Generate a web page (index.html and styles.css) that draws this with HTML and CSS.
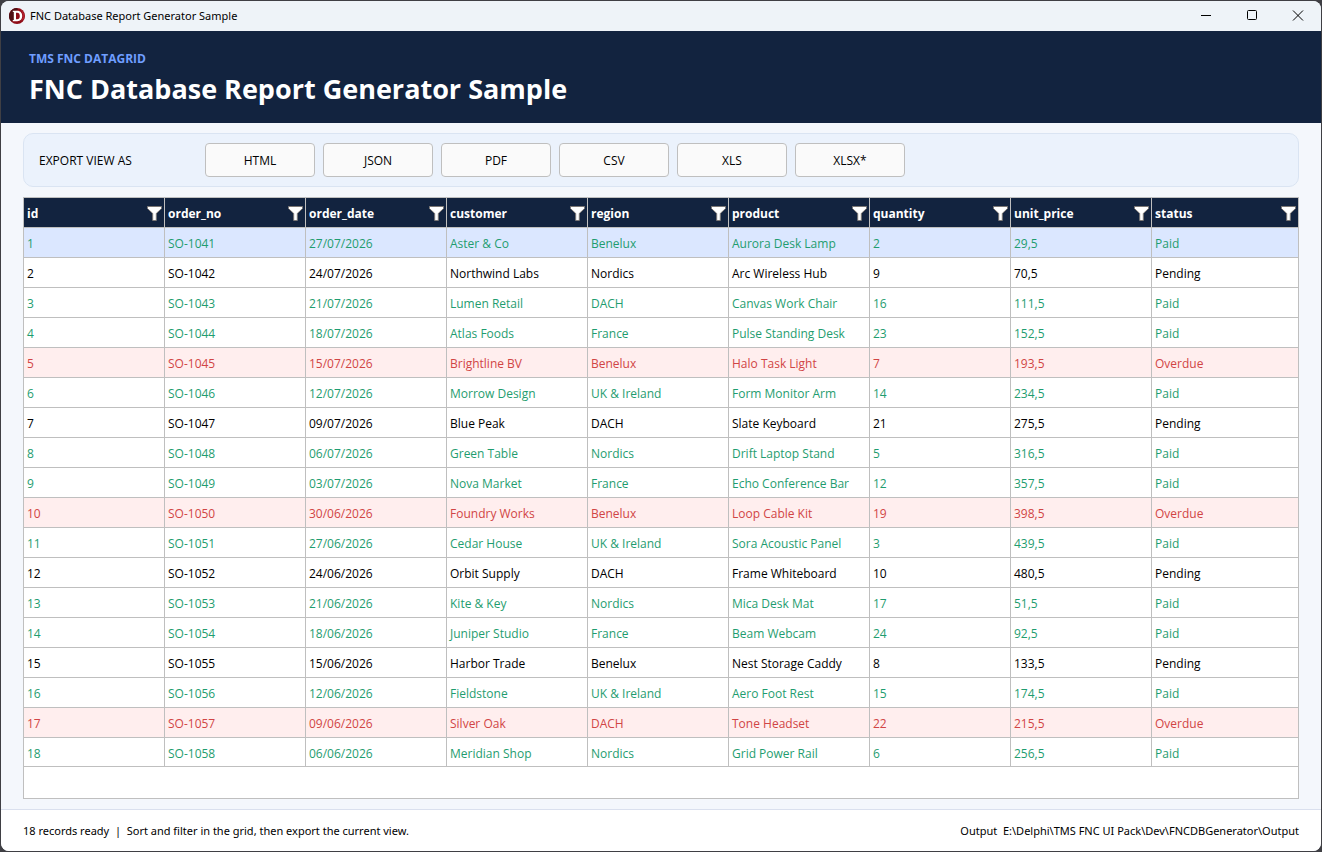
FILE: index.html
```html
<!DOCTYPE html>
<html lang="en">
<head>
<meta charset="utf-8">
<title>FNC Database Report Generator Sample</title>
<link rel="stylesheet" href="styles.css">
</head>
<body>
<svg class="defs" aria-hidden="true">
  <symbol id="funnel" viewBox="0 0 16 16">
    <path d="M1.5 .5H15.5V2.6L10.3 7.4V14.5H6.7V7.4L1.5 2.6Z" fill="#fff" stroke="#7b7775" stroke-width="1"/>
  </symbol>
</svg>
<div class="window">
  <div class="titlebar">
    <svg class="app-icon" viewBox="0 0 16 16" aria-hidden="true">
      <circle cx="8" cy="8" r="8" fill="#8f0d18"/>
      <path d="M8 0A8 8 0 0 0 2 13.3L5 12V3L9 2Z" fill="#4f1015"/>
      <path d="M11 1L13 4L14 9L12 13L15 11A8 8 0 0 0 11 1Z" fill="#b3202c"/>
      <path fill-rule="evenodd" d="M3.8 2.8H8.2C11.4 2.8 13.2 4.9 13.2 8S11.4 13.2 8.2 13.2H3.8V12H4.8V4H3.8ZM7 4.7V11.3H8.1C9.9 11.3 10.8 10.1 10.8 8S9.9 4.7 8.1 4.7Z" fill="#fff"/>
    </svg>
    <span class="titlebar-text">FNC Database Report Generator Sample</span>
    <div class="caption-buttons">
      <button type="button" class="caption-button" aria-label="Minimize"><svg viewBox="0 0 12 12" aria-hidden="true"><path d="M1 5.5H11"/></svg></button>
      <button type="button" class="caption-button" aria-label="Maximize"><svg viewBox="0 0 12 12" aria-hidden="true"><rect x="1.5" y=".5" width="9" height="9" rx="1"/></svg></button>
      <button type="button" class="caption-button" aria-label="Close"><svg viewBox="0 0 12 12" aria-hidden="true"><path d="M1 .5L11 10.5M11 .5L1 10.5"/></svg></button>
    </div>
  </div>
  <header class="banner">
    <p class="eyebrow">TMS FNC DATAGRID</p>
    <h1 class="heading">FNC Database Report Generator Sample</h1>
  </header>
  <main class="content">
    <section class="export-panel" aria-labelledby="export-label">
      <span class="export-label" id="export-label">EXPORT VIEW AS</span>
      <div class="export-buttons">
        <button type="button" class="export-button">HTML</button>
        <button type="button" class="export-button">JSON</button>
        <button type="button" class="export-button">PDF</button>
        <button type="button" class="export-button">CSV</button>
        <button type="button" class="export-button">XLS</button>
        <button type="button" class="export-button">XLSX*</button>
      </div>
    </section>
    <div class="grid">
      <table class="grid-table">
        <colgroup><col class="col" span="8"><col></colgroup>
        <thead>
          <tr>
            <th><div class="head-cell">id<button type="button" class="filter" aria-label="Filter id"><svg><use href="#funnel"/></svg></button></div></th>
            <th><div class="head-cell">order_no<button type="button" class="filter" aria-label="Filter order_no"><svg><use href="#funnel"/></svg></button></div></th>
            <th><div class="head-cell">order_date<button type="button" class="filter" aria-label="Filter order_date"><svg><use href="#funnel"/></svg></button></div></th>
            <th><div class="head-cell">customer<button type="button" class="filter" aria-label="Filter customer"><svg><use href="#funnel"/></svg></button></div></th>
            <th><div class="head-cell">region<button type="button" class="filter" aria-label="Filter region"><svg><use href="#funnel"/></svg></button></div></th>
            <th><div class="head-cell">product<button type="button" class="filter" aria-label="Filter product"><svg><use href="#funnel"/></svg></button></div></th>
            <th><div class="head-cell">quantity<button type="button" class="filter" aria-label="Filter quantity"><svg><use href="#funnel"/></svg></button></div></th>
            <th><div class="head-cell">unit_price<button type="button" class="filter" aria-label="Filter unit_price"><svg><use href="#funnel"/></svg></button></div></th>
            <th><div class="head-cell">status<button type="button" class="filter" aria-label="Filter status"><svg><use href="#funnel"/></svg></button></div></th>
          </tr>
        </thead>
        <tbody>
          <tr class="paid selected"><td>1</td><td>SO-1041</td><td>27/07/2026</td><td>Aster &amp; Co</td><td>Benelux</td><td>Aurora Desk Lamp</td><td>2</td><td>29,5</td><td>Paid</td></tr>
          <tr><td>2</td><td>SO-1042</td><td>24/07/2026</td><td>Northwind Labs</td><td>Nordics</td><td>Arc Wireless Hub</td><td>9</td><td>70,5</td><td>Pending</td></tr>
          <tr class="paid"><td>3</td><td>SO-1043</td><td>21/07/2026</td><td>Lumen Retail</td><td>DACH</td><td>Canvas Work Chair</td><td>16</td><td>111,5</td><td>Paid</td></tr>
          <tr class="paid"><td>4</td><td>SO-1044</td><td>18/07/2026</td><td>Atlas Foods</td><td>France</td><td>Pulse Standing Desk</td><td>23</td><td>152,5</td><td>Paid</td></tr>
          <tr class="overdue"><td>5</td><td>SO-1045</td><td>15/07/2026</td><td>Brightline BV</td><td>Benelux</td><td>Halo Task Light</td><td>7</td><td>193,5</td><td>Overdue</td></tr>
          <tr class="paid"><td>6</td><td>SO-1046</td><td>12/07/2026</td><td>Morrow Design</td><td>UK &amp; Ireland</td><td>Form Monitor Arm</td><td>14</td><td>234,5</td><td>Paid</td></tr>
          <tr><td>7</td><td>SO-1047</td><td>09/07/2026</td><td>Blue Peak</td><td>DACH</td><td>Slate Keyboard</td><td>21</td><td>275,5</td><td>Pending</td></tr>
          <tr class="paid"><td>8</td><td>SO-1048</td><td>06/07/2026</td><td>Green Table</td><td>Nordics</td><td>Drift Laptop Stand</td><td>5</td><td>316,5</td><td>Paid</td></tr>
          <tr class="paid"><td>9</td><td>SO-1049</td><td>03/07/2026</td><td>Nova Market</td><td>France</td><td>Echo Conference Bar</td><td>12</td><td>357,5</td><td>Paid</td></tr>
          <tr class="overdue"><td>10</td><td>SO-1050</td><td>30/06/2026</td><td>Foundry Works</td><td>Benelux</td><td>Loop Cable Kit</td><td>19</td><td>398,5</td><td>Overdue</td></tr>
          <tr class="paid"><td>11</td><td>SO-1051</td><td>27/06/2026</td><td>Cedar House</td><td>UK &amp; Ireland</td><td>Sora Acoustic Panel</td><td>3</td><td>439,5</td><td>Paid</td></tr>
          <tr><td>12</td><td>SO-1052</td><td>24/06/2026</td><td>Orbit Supply</td><td>DACH</td><td>Frame Whiteboard</td><td>10</td><td>480,5</td><td>Pending</td></tr>
          <tr class="paid"><td>13</td><td>SO-1053</td><td>21/06/2026</td><td>Kite &amp; Key</td><td>Nordics</td><td>Mica Desk Mat</td><td>17</td><td>51,5</td><td>Paid</td></tr>
          <tr class="paid"><td>14</td><td>SO-1054</td><td>18/06/2026</td><td>Juniper Studio</td><td>France</td><td>Beam Webcam</td><td>24</td><td>92,5</td><td>Paid</td></tr>
          <tr><td>15</td><td>SO-1055</td><td>15/06/2026</td><td>Harbor Trade</td><td>Benelux</td><td>Nest Storage Caddy</td><td>8</td><td>133,5</td><td>Pending</td></tr>
          <tr class="paid"><td>16</td><td>SO-1056</td><td>12/06/2026</td><td>Fieldstone</td><td>UK &amp; Ireland</td><td>Aero Foot Rest</td><td>15</td><td>174,5</td><td>Paid</td></tr>
          <tr class="overdue"><td>17</td><td>SO-1057</td><td>09/06/2026</td><td>Silver Oak</td><td>DACH</td><td>Tone Headset</td><td>22</td><td>215,5</td><td>Overdue</td></tr>
          <tr class="paid"><td>18</td><td>SO-1058</td><td>06/06/2026</td><td>Meridian Shop</td><td>Nordics</td><td>Grid Power Rail</td><td>6</td><td>256,5</td><td>Paid</td></tr>
        </tbody>
      </table>
    </div>
  </main>
  <footer class="statusbar">
    <span class="status-text">18 records ready &nbsp;|&nbsp; Sort and filter in the grid, then export the current view.</span>
    <span class="status-text">Output &nbsp;E:\Delphi\TMS FNC UI Pack\Dev\FNCDBGenerator\Output</span>
  </footer>
</div>
</body>
</html>
```

FILE: styles.css
```css
* {
  box-sizing: border-box;
}

body {
  margin: 0;
  padding: 1px;
  min-height: 100vh;
  display: flex;
  background: #3f3f44;
  color: #000;
  font-family: "Open Sans", "Noto Sans", sans-serif;
  font-size: 12px;
  line-height: 16px;
}

button {
  margin: 0;
  padding: 0;
  border: 0;
  background: none;
  color: inherit;
  font: inherit;
}

.defs {
  position: absolute;
  width: 0;
  height: 0;
}

.window {
  flex: 1;
  min-width: 0;
  display: flex;
  flex-direction: column;
  overflow: hidden;
  border-radius: 8px;
  background: #f4f7fc;
}

.titlebar {
  display: flex;
  align-items: center;
  height: 30px;
  padding-left: 8px;
  background: #eef3f8;
}

.titlebar-text,
.status-text {
  font-family: "Noto Sans", "Open Sans", sans-serif;
  font-size: 11px;
}

.app-icon {
  width: 16px;
  height: 16px;
  margin-right: 5px;
}

.caption-buttons {
  display: flex;
  margin-left: auto;
}

.caption-button {
  display: flex;
  align-items: center;
  justify-content: center;
  width: 46px;
  height: 30px;
}

.caption-button svg {
  width: 12px;
  height: 12px;
  fill: none;
  stroke: #000;
}

.banner {
  height: 92px;
  padding: 20px 28px 0;
  background: #12233f;
}

.eyebrow {
  margin: 0;
  color: #6f9eff;
  font-weight: 700;
}

.heading {
  margin: 2px 0 0;
  color: #fff;
  font-size: 27px;
  font-weight: 700;
  line-height: 40px;
}

.content {
  flex: 1;
  display: flex;
  flex-direction: column;
  gap: 10px;
  padding: 10px 22px;
}

.export-panel {
  display: flex;
  align-items: center;
  height: 54px;
  padding: 0 15px;
  border: 1px solid #dae4f2;
  border-radius: 10px;
  background: #ebf2fc;
}

.export-label {
  width: 166px;
  padding-top: 2px;
}

.export-buttons {
  display: flex;
  gap: 8px;
}

.export-button {
  width: 110px;
  height: 34px;
  padding-top: 2px;
  border: 1px solid #bfbfbf;
  border-radius: 4px;
  background: #fafafa;
}

.grid {
  flex: 1;
  border: 1px solid #bfbfbf;
  background: #fff;
}

.grid-table {
  width: 100%;
  table-layout: fixed;
  border-spacing: 0;
}

.col {
  width: 141px;
}

.grid-table th,
.grid-table td {
  height: 30px;
  padding: 2px 3px 0;
  border: solid #bfbfbf;
  border-width: 0 1px 1px 0;
  text-align: left;
  white-space: nowrap;
}

.grid-table th:last-child,
.grid-table td:last-child {
  border-right: 0;
}

.grid-table th {
  padding-right: 2px;
  background: #12233f;
  color: #fff;
}

.grid-table tbody tr:last-child td {
  height: 29px;
  padding-top: 3px;
}

.head-cell {
  display: flex;
  align-items: center;
  justify-content: space-between;
}

.filter {
  width: 16px;
  height: 16px;
}

.filter svg {
  display: block;
  width: 16px;
  height: 16px;
}

.paid {
  color: #1f9d6f;
}

.overdue {
  color: #d14545;
  background: #ffeeee;
}

.selected {
  background: #dbe7ff;
}

.statusbar {
  display: flex;
  align-items: center;
  justify-content: space-between;
  height: 42px;
  padding: 0 22px;
  border-top: 1px solid #dae0ee;
  background: #fff;
}
```
